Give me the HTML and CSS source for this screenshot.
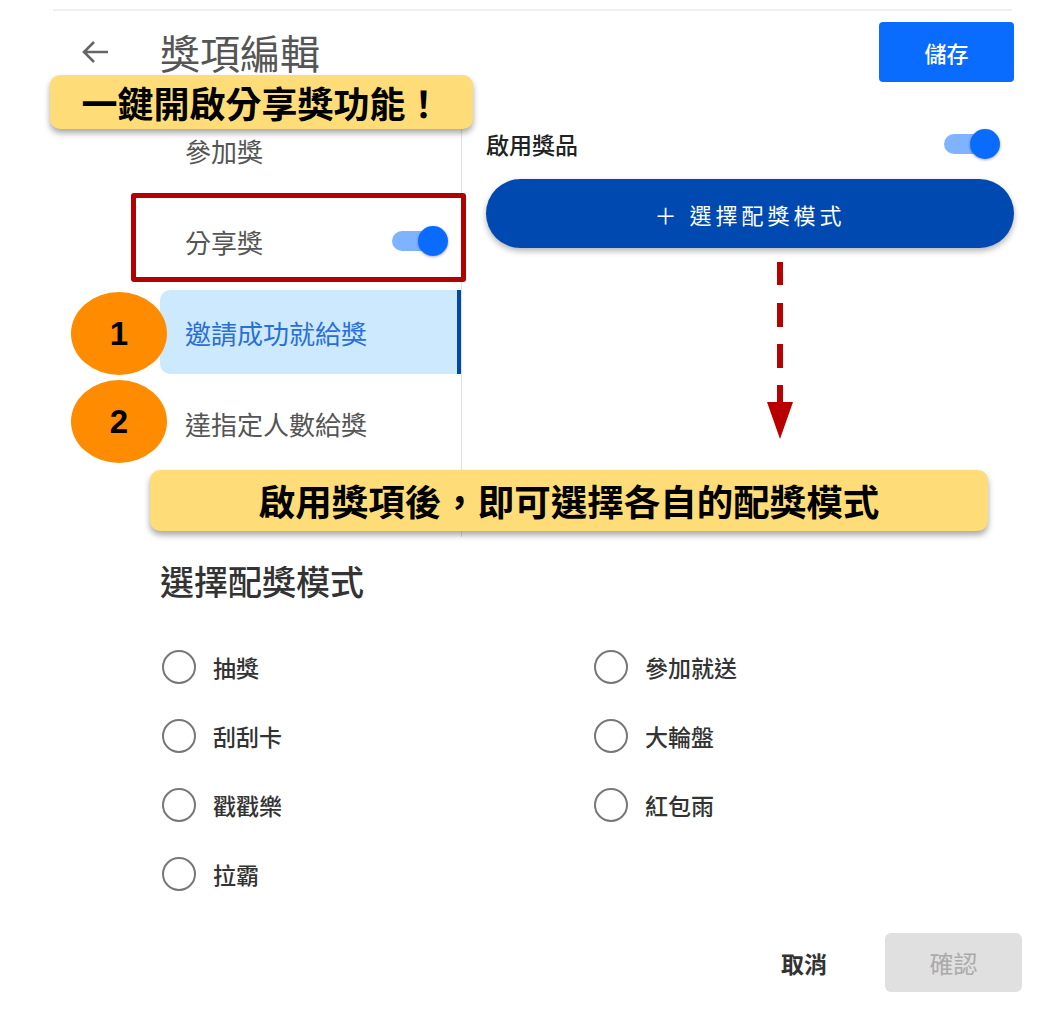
FILE: index.html
```html
<!DOCTYPE html>
<html>
<head>
    <title>獎項編輯</title>
    <link rel="stylesheet" href="styles.css">
</head>
<body>
    <div class="page">
        <div class="topline"></div>

        <div class="header">
            <svg class="back" width="28" height="26" viewBox="0 0 28 26">
                <path d="M27 13H3M13 3L3 13l10 10" fill="none" stroke="#666" stroke-width="2.6"/>
            </svg>
            <h1 class="title">獎項編輯</h1>
            <button class="save">儲存</button>
        </div>

        <div class="main">
            <div class="sidebar">
                <div class="item">參加獎</div>
                <div class="item">
                    <span>分享獎</span>
                    <span class="toggle"><span class="track"></span><span class="knob"></span></span>
                </div>
                <div class="item selected">邀請成功就給獎</div>
                <div class="item">達指定人數給獎</div>
            </div>
            <div class="pane">
                <div class="enable-row">
                    <span>啟用獎品</span>
                    <span class="toggle"><span class="track"></span><span class="knob"></span></span>
                </div>
                <button class="mode-btn">＋ 選擇配獎模式</button>
            </div>
        </div>

        <div class="modes">
            <h2 class="modes-title">選擇配獎模式</h2>
            <div class="radio-grid">
                <label class="radio"><span class="circle"></span>抽獎</label>
                <label class="radio"><span class="circle"></span>參加就送</label>
                <label class="radio"><span class="circle"></span>刮刮卡</label>
                <label class="radio"><span class="circle"></span>大輪盤</label>
                <label class="radio"><span class="circle"></span>戳戳樂</label>
                <label class="radio"><span class="circle"></span>紅包雨</label>
                <label class="radio"><span class="circle"></span>拉霸</label>
            </div>
        </div>

        <div class="footer">
            <span class="cancel">取消</span>
            <button class="confirm">確認</button>
        </div>

        <!-- annotations on top of the screen -->
        <div class="callout callout-top">一鍵開啟分享獎功能！</div>
        <div class="redbox"></div>
        <div class="badge badge-1">1</div>
        <div class="badge badge-2">2</div>
        <svg class="arrow" width="28" height="178" viewBox="0 0 28 178">
            <path d="M14 0v23M14 41v24M14 82v24M14 123v18" stroke="#b80000" stroke-width="6"/>
            <path d="M1 140h26L14 177z" fill="#b80000"/>
        </svg>
        <div class="callout callout-mid">啟用獎項後，即可選擇各自的配獎模式</div>
    </div>
</body>
</html>
```

FILE: styles.css
```css
body {
    margin: 0;
    background: #fff;
    font-family: "Noto Sans CJK TC", "Noto Sans", sans-serif;
    color: #333;
}

.page {
    position: relative;
    width: 1052px;
    height: 1014px;
    overflow: hidden;
}

.topline {
    margin: 9px 40px 0 53px;
    border-top: 2px solid #f0f0f0;
}

.header {
    display: flex;
    align-items: center;
    height: 60px;
    margin-top: 11px;
    padding: 0 38px 0 81px;
}

.back {
    display: block;
}

.title {
    margin: 0 0 0 51px;
    font-size: 40px;
    font-weight: 400;
    color: #555;
    line-height: 1;
}

.save {
    margin-left: auto;
    width: 135px;
    height: 60px;
    border: none;
    border-radius: 4px;
    background: #0a6cff;
    color: #fff;
    font-family: inherit;
    font-size: 22px;
    font-weight: 500;
}

.main {
    display: flex;
    margin-top: 18px;
    padding-left: 160px;
}

.sidebar {
    width: 301px;
    padding: 8px 0 72px;
    border-right: 1px solid #e2e2e2;
}

.item {
    display: flex;
    align-items: center;
    justify-content: space-between;
    height: 84px;
    margin-bottom: 7px;
    padding: 0 13px 0 25px;
    font-size: 26px;
    color: #555;
    box-sizing: border-box;
}

.item:last-child {
    margin-bottom: 0;
}

.item.selected {
    background: #cde9fd;
    color: #2a6fd6;
    border-radius: 10px 0 0 10px;
    border-right: 4px solid #0047b3;
}

.toggle {
    position: relative;
    display: inline-block;
    width: 56px;
    height: 30px;
}

.track {
    position: absolute;
    left: 0;
    top: 5px;
    width: 45px;
    height: 20px;
    border-radius: 10px;
    background: #80b3ff;
}

.knob {
    position: absolute;
    right: 0;
    top: 0;
    width: 30px;
    height: 30px;
    border-radius: 50%;
    background: #0a6cff;
    box-shadow: 0 1px 3px rgba(0, 0, 0, 0.35);
}

.pane {
    flex: 1;
    padding: 28px 38px 0 24px;
}

.enable-row {
    display: flex;
    align-items: center;
    justify-content: space-between;
    height: 32px;
    padding-right: 14px;
    font-size: 23px;
    font-weight: 500;
    color: #222;
}

.mode-btn {
    display: block;
    width: 100%;
    height: 69px;
    margin-top: 19px;
    border: none;
    border-radius: 35px;
    background: #0049b0;
    color: #fff;
    font-family: inherit;
    font-size: 22px;
    letter-spacing: 4px;
    box-shadow: 0 3px 6px rgba(0, 0, 0, 0.3);
}

.modes {
    padding-left: 160px;
}

.modes-title {
    margin: 23px 0 0;
    font-size: 34px;
    font-weight: 500;
    line-height: 41px;
    color: #333;
}

.radio-grid {
    display: grid;
    grid-template-columns: 432px 1fr;
    grid-auto-rows: 69px;
    margin-top: 31px;
    padding-left: 2px;
}

.radio {
    display: flex;
    align-items: center;
    gap: 17px;
    font-size: 23px;
    font-weight: 500;
    color: #333;
}

.circle {
    width: 34px;
    height: 34px;
    box-sizing: border-box;
    border: 2.5px solid #777;
    border-radius: 50%;
}

.footer {
    display: flex;
    align-items: center;
    justify-content: flex-end;
    gap: 58px;
    margin-top: 25px;
    padding-right: 30px;
}

.cancel {
    font-size: 23px;
    font-weight: 700;
    color: #333;
}

.confirm {
    width: 137px;
    height: 59px;
    border: none;
    border-radius: 6px;
    background: #e0e0e0;
    color: #aaa;
    font-family: inherit;
    font-size: 24px;
}

.callout {
    position: absolute;
    display: flex;
    align-items: center;
    justify-content: center;
    background: #fedd78;
    border-radius: 10px;
    box-shadow: 0 4px 6px rgba(0, 0, 0, 0.35);
    font-weight: 700;
    font-size: 36px;
    color: #000;
}

.callout-top {
    left: 50px;
    top: 75px;
    width: 423px;
    height: 54px;
}

.callout-mid {
    left: 150px;
    top: 470px;
    width: 838px;
    height: 61px;
    font-size: 36.5px;
}

.redbox {
    position: absolute;
    left: 131px;
    top: 193px;
    width: 335px;
    height: 89px;
    box-sizing: border-box;
    border: 5px solid #b30000;
    border-radius: 3px;
}

.badge {
    position: absolute;
    left: 71px;
    width: 96px;
    height: 83px;
    border-radius: 50%;
    background: #ff8c00;
    display: flex;
    align-items: center;
    justify-content: center;
    font-family: "Liberation Sans", Arial, sans-serif;
    font-weight: 700;
    font-size: 33px;
    color: #000;
}

.badge-1 {
    top: 292px;
}

.badge-2 {
    top: 380px;
}

.arrow {
    position: absolute;
    left: 766px;
    top: 262px;
}
```
